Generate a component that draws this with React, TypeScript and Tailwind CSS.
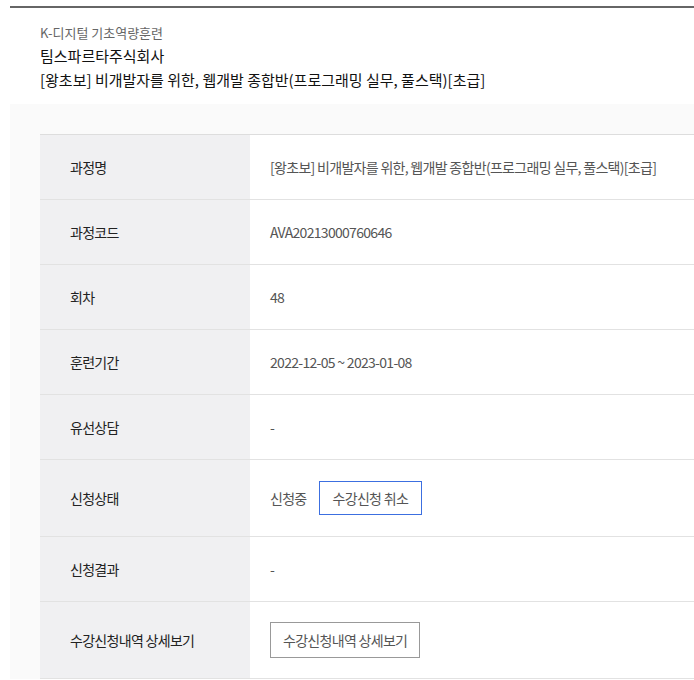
const rows: { label: string; value: React.ReactNode; tall?: boolean }[] = [
  { label: '과정명', value: '[왕초보] 비개발자를 위한, 웹개발 종합반(프로그래밍 실무, 풀스택)[초급]' },
  { label: '과정코드', value: 'AVA20213000760646' },
  { label: '회차', value: '48' },
  { label: '훈련기간', value: '2022-12-05 ~ 2023-01-08' },
  { label: '유선상담', value: '-' },
  {
    label: '신청상태',
    tall: true,
    value: (
      <div className="flex items-center gap-[12px]">
        <span>신청중</span>
        <button
          type="button"
          className="h-[34px] border border-[#3c6fe0] bg-white px-[13px] text-sm tracking-[-0.05em] text-[#555]"
        >
          수강신청 취소
        </button>
      </div>
    ),
  },
  { label: '신청결과', value: '-' },
  {
    label: '수강신청내역 상세보기',
    tall: true,
    value: (
      <button
        type="button"
        className="h-[36px] border border-[#999] bg-white px-[12px] text-sm tracking-[-0.05em] text-[#555]"
      >
        수강신청내역 상세보기
      </button>
    ),
  },
]

export default function App() {
  return (
    <div
      className="min-h-[680px] bg-white pl-[10px] pt-[6px]"
      style={{ fontFamily: '"Noto Sans CJK KR", "Noto Sans", sans-serif' }}
    >
      <div className="h-[2px] bg-[#666]" />
      <div className="pl-[30px] pt-[14px] pb-[12px]">
        <p className="text-[13px] leading-[22px] text-[#666]">K-디지털 기초역량훈련</p>
        <p className="text-[15px] leading-[24px] text-[#111]">팀스파르타주식회사</p>
        <p className="text-[15px] leading-[24px] text-[#111]">
          [왕초보] 비개발자를 위한, 웹개발 종합반(프로그래밍 실무, 풀스택)[초급]
        </p>
      </div>
      <div className="bg-[#fafafa] pl-[30px] pt-[30px]">
        <div className="border-t border-[#ddd] bg-white">
          {rows.map((r) => (
            <div
              key={r.label}
              className={`flex border-b border-[#e2e2e2] text-sm tracking-[-0.05em] ${r.tall ? 'h-[77px]' : 'h-[65px]'}`}
            >
              <div className="flex w-[210px] shrink-0 items-center bg-[#f0f0f2] pl-[30px] text-[#222]">
                {r.label}
              </div>
              <div className="flex flex-1 items-center pl-[20px] text-[#555]">{r.value}</div>
            </div>
          ))}
        </div>
      </div>
    </div>
  )
}
